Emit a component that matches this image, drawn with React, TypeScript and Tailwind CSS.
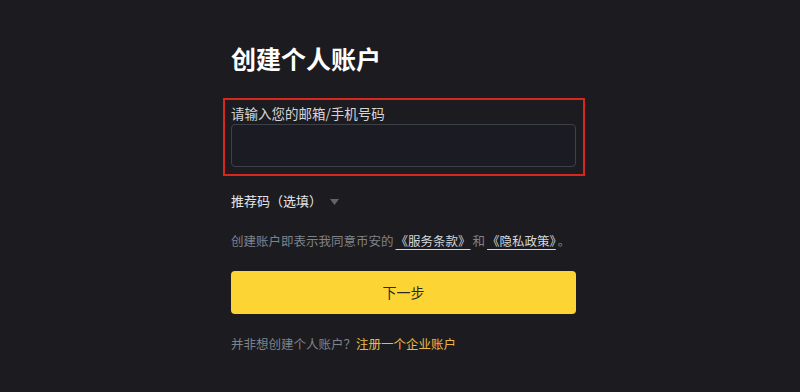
import React from "react";

export default function App() {
  return (
    <div
      className="w-[800px] h-[392px] bg-[#1c1c20] overflow-hidden"
      style={{ fontFamily: '"Noto Sans CJK SC", "Noto Sans", sans-serif' }}
    >
      <div className="w-[345px] ml-[231px] pt-[40px] flex flex-col">
        <h1 className="text-[25px] leading-[36px] font-bold text-white">创建个人账户</h1>

        {/* highlighted input group */}
        <div className="mt-[22px] -ml-[8px] -mr-[9px] border-[2px] border-[#d9261f] pl-[6px] pr-[7px] pt-[3px] pb-[7px]">
          <label className="block text-[13.5px] leading-[20px] text-[#d4d5d8]">请输入您的邮箱/手机号码</label>
          <div className="mt-[1px] h-[43px] rounded-[4px] border border-[#3e4048] bg-[#1b1c23]"></div>
        </div>

        <div className="mt-[15px] flex items-center text-[13px] leading-[20px] text-[#e6e7ea]">
          <span>推荐码（选填）</span>
          <svg className="ml-[8px] mt-[1px]" width="9" height="6" viewBox="0 0 9 6">
            <path d="M0 0 H9 L4.5 6 Z" fill="#5f6470" />
          </svg>
        </div>

        <p className="mt-[20px] text-[12.5px] leading-[20px] text-[#7f828a] whitespace-nowrap">
          创建账户即表示我同意币安的
          <span className="ml-[2px] mr-[2px] text-[#d6d7da] underline underline-offset-[3px]">《服务条款》</span>和
          <span className="ml-[2px] mr-[2px] text-[#d6d7da] underline underline-offset-[3px]">《隐私政策》</span>。
        </p>

        <button className="mt-[20px] h-[43px] w-full rounded-[4px] bg-[#fcd535] text-[14px] text-[#2a2a22]">
          下一步
        </button>

        <p className="mt-[20px] text-[12.5px] leading-[20px] text-[#7f828a]">
          并非想创建个人账户？<span className="text-[#e8b94a]">注册一个企业账户</span>
        </p>
      </div>
    </div>
  );
}
